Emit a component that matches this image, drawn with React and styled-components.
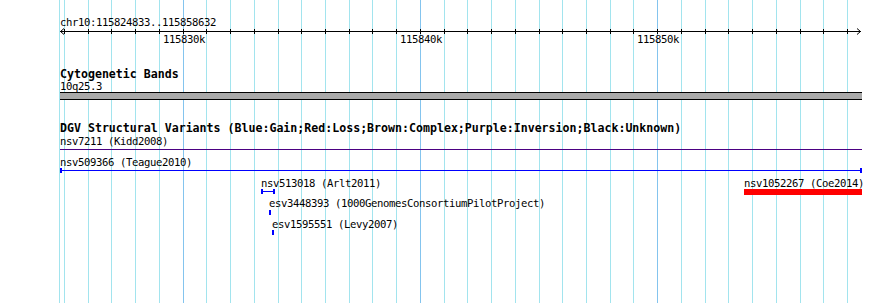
import React from 'react';
import styled, { createGlobalStyle } from 'styled-components';

const VIEW_START = 115824833;
const VIEW_END = 115858632;
const TRACK_LEFT = 60;
const TRACK_WIDTH = 802;
const SCALE = TRACK_WIDTH / (VIEW_END - VIEW_START);

const toX = bp => (bp - VIEW_START) * SCALE;

const ticks = [];
for (let k = 115825; k <= 115858; k++) {
  ticks.push({ bp: k * 1000, major: k % 10 === 0, label: `${k}k` });
}

const lanes = [
  {
    height: 21,
    features: [
      { id: 'nsv7211', study: 'Kidd2008', start: 115800000, end: 115900000, glyph: 'line', color: '#4b0082' },
    ],
  },
  {
    height: 21,
    features: [
      { id: 'nsv509366', study: 'Teague2010', start: VIEW_START, end: VIEW_END, glyph: 'line', caps: true, color: '#0000ff' },
    ],
  },
  {
    height: 20,
    features: [
      { id: 'nsv513018', study: 'Arlt2011', start: 115833300, end: 115833900, glyph: 'line', caps: true, color: '#0000ff' },
      { id: 'nsv1052267', study: 'Coe2014', start: 115853666, end: 115870000, glyph: 'box', h: 6, top: 0, color: '#ff0000' },
    ],
  },
  {
    height: 21,
    features: [
      { id: 'esv3448393', study: '1000GenomesConsortiumPilotProject', start: 115833640, end: 115833724, glyph: 'box', h: 5, top: 1, color: '#0000ff' },
    ],
  },
  {
    height: 21,
    features: [
      { id: 'esv1595551', study: 'Levy2007', start: 115833766, end: 115833850, glyph: 'box', h: 5, top: 0, color: '#0000ff' },
    ],
  },
];

const GlobalStyle = createGlobalStyle`
  html, body {
    margin: 0;
    padding: 0;
    background: #ffffff;
  }
  body {
    font-family: "DejaVu Sans Mono", "Liberation Mono", monospace;
    color: #000000;
  }
`;

const Panel = styled.div`
  position: relative;
  width: 890px;
  height: 303px;
  overflow: hidden;
  background: #ffffff;
`;

const GridLayer = styled.svg`
  position: absolute;
  left: 0;
  top: 0;
  z-index: 0;
`;

const Content = styled.div`
  position: relative;
  z-index: 1;
  padding-left: ${TRACK_LEFT}px;
  width: ${TRACK_WIDTH}px;
`;

const SmallText = styled.div`
  font-size: 10.6px;
  letter-spacing: -0.38px;
  line-height: 11px;
  height: 11px;
  white-space: nowrap;
`;

const ChromLabel = styled(SmallText)`
  padding-top: 17px;
`;

const BandName = styled(SmallText)`
  margin-top: 1px;
  height: 10px;
  line-height: 10px;
`;

const Axis = styled.svg`
  display: block;
  overflow: visible;
`;

const TickRow = styled.div`
  position: relative;
  height: 11px;
`;

const TickLabel = styled(SmallText)`
  position: absolute;
  top: 0;
  transform: translateX(-50%);
`;

const Track = styled.section`
  display: flex;
  flex-direction: column;
  margin-top: ${p => p.$gap}px;
`;

const TrackTitle = styled.div`
  font-size: 11.6px;
  font-weight: bold;
  line-height: 12px;
  height: 12px;
  white-space: nowrap;
`;

const Band = styled.div`
  margin-top: 1px;
  height: 6px;
  background: #a9a9a9;
  border-top: 1px solid #000000;
  border-bottom: 1px solid #000000;
`;

const Lanes = styled.div`
  margin-top: 2px;
  width: ${TRACK_WIDTH}px;
`;

const Lane = styled.div`
  position: relative;
  height: ${p => p.$h}px;
`;

const Feature = styled.div`
  position: absolute;
  top: 0;
  display: flex;
  flex-direction: column;
  align-items: flex-start;
`;

const LineGlyph = styled.div`
  position: relative;
  box-sizing: border-box;
  height: 5px;
  border-left: ${p => (p.$caps ? `2px solid ${p.$color}` : 'none')};
  border-right: ${p => (p.$caps ? `2px solid ${p.$color}` : 'none')};

  &::before {
    content: '';
    position: absolute;
    left: 0;
    right: 0;
    top: 2px;
    height: 1px;
    background: ${p => p.$color};
  }
`;

const BoxGlyph = styled.div`
  margin-top: ${p => p.$top}px;
  height: ${p => p.$h}px;
  background: ${p => p.$color};
`;

const Grid = () => {
  const lines = [{ x: TRACK_LEFT - 1, major: false }].concat(
    ticks.map(t => ({ x: TRACK_LEFT + Math.round(toX(t.bp)), major: t.major }))
  );
  return (
    <GridLayer width="890" height="303">
      {lines.map((l, i) => (
        <line
          key={i}
          x1={l.x + 0.5}
          x2={l.x + 0.5}
          y1="0"
          y2="303"
          stroke={l.major ? '#84c4ee' : '#a2e4ee'}
          strokeWidth="1"
        />
      ))}
    </GridLayer>
  );
};

const Ruler = () => (
  <div>
    <ChromLabel>chr10:{VIEW_START}..{VIEW_END}</ChromLabel>
    <Axis width={TRACK_WIDTH} height="6">
      <line x1="0" x2={TRACK_WIDTH - 1} y1="3.5" y2="3.5" stroke="#000" strokeWidth="1" />
      <polyline points="4,0.5 0.5,3.5 4,6.5" fill="none" stroke="#000" strokeWidth="1" />
      <polyline points={`${TRACK_WIDTH - 5},0.5 ${TRACK_WIDTH - 1.5},3.5 ${TRACK_WIDTH - 5},6.5`} fill="none" stroke="#000" strokeWidth="1" />
      {ticks.map(t => {
        const x = Math.round(toX(t.bp)) + 0.5;
        return <line key={t.bp} x1={x} x2={x} y1="1" y2="6" stroke="#000" strokeWidth="1" />;
      })}
    </Axis>
    <TickRow>
      {ticks.filter(t => t.major).map(t => (
        <TickLabel key={t.bp} style={{ left: Math.round(toX(t.bp)) + 1 }}>{t.label}</TickLabel>
      ))}
    </TickRow>
  </div>
);

const FeatureItem = ({ f }) => {
  const left = Math.max(0, toX(f.start));
  const right = Math.min(TRACK_WIDTH, toX(f.end));
  const width = Math.max(2, Math.round(right - left));
  return (
    <Feature style={{ left: Math.round(left) }}>
      <SmallText>{f.id} ({f.study})</SmallText>
      {f.glyph === 'line' ? (
        <LineGlyph $color={f.color} $caps={f.caps} style={{ width }} />
      ) : (
        <BoxGlyph $color={f.color} $h={f.h} $top={f.top} style={{ width }} />
      )}
    </Feature>
  );
};

export default function App() {
  return (
    <>
      <GlobalStyle />
      <Panel>
        <Grid />
        <Content>
          <Ruler />
          <Track $gap={23}>
            <TrackTitle>Cytogenetic Bands</TrackTitle>
            <BandName>10q25.3</BandName>
            <Band />
          </Track>
          <Track $gap={22}>
            <TrackTitle>DGV Structural Variants (Blue:Gain;Red:Loss;Brown:Complex;Purple:Inversion;Black:Unknown)</TrackTitle>
            <Lanes>
              {lanes.map((lane, i) => (
                <Lane key={i} $h={lane.height}>
                  {lane.features.map(f => (
                    <FeatureItem key={f.id} f={f} />
                  ))}
                </Lane>
              ))}
            </Lanes>
          </Track>
        </Content>
      </Panel>
    </>
  );
}
